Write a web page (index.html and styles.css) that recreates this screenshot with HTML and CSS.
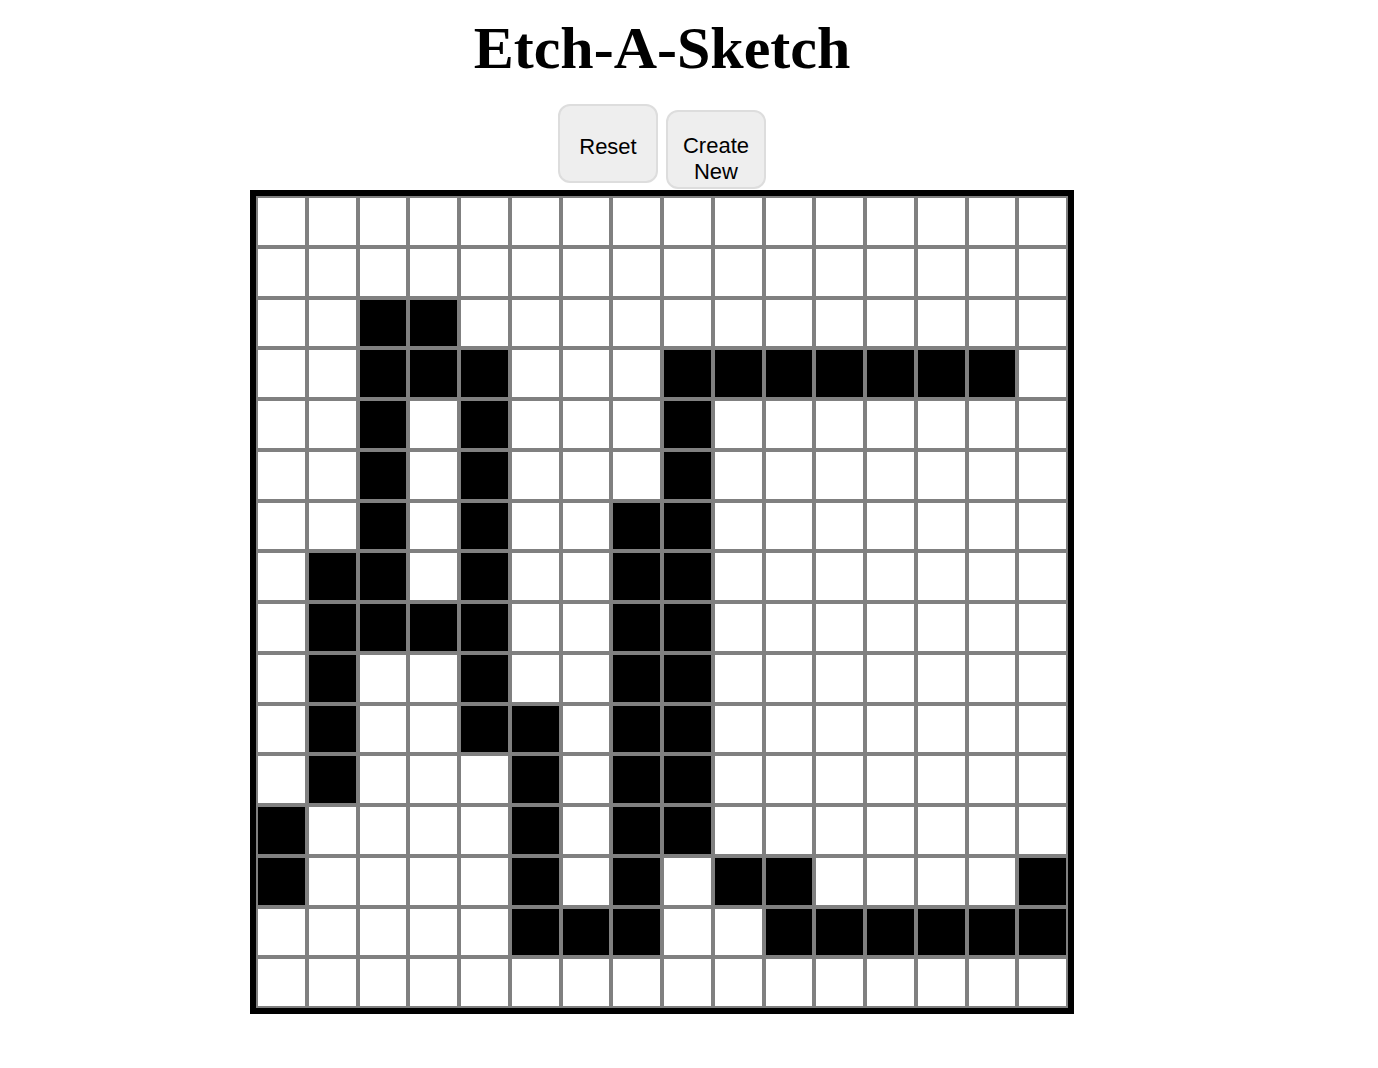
FILE: index.html
```html
<!DOCTYPE html>
<html lang="en">
<head>
    <meta charset="UTF-8">
    <meta name="viewport" content="width=device-width, initial-scale=1.0">
    <title>Etch-A-Sketch</title>
    <link rel="stylesheet" href="styles.css">
</head>
<body>
    <div class="page">
        <h1>Etch-A-Sketch</h1>
        <div class="controls">
            <button type="button" class="btn" id="resetButton" onclick="resetGrid()">Reset</button>
            <button type="button" class="btn btn-create" id="createButton" onclick="createGrid(16)">Create New</button>
        </div>
        <div class="sketch" id="sketch"></div>
    </div>

    <script>
        const size = 16;

        // cells that were already drawn, as [row, column]
        const drawn = [
            [2, 2], [2, 3],
            [3, 2], [3, 3], [3, 4], [3, 8], [3, 9], [3, 10], [3, 11], [3, 12], [3, 13], [3, 14],
            [4, 2], [4, 4], [4, 8],
            [5, 2], [5, 4], [5, 8],
            [6, 2], [6, 4], [6, 7], [6, 8],
            [7, 1], [7, 2], [7, 4], [7, 7], [7, 8],
            [8, 1], [8, 2], [8, 3], [8, 4], [8, 7], [8, 8],
            [9, 1], [9, 4], [9, 7], [9, 8],
            [10, 1], [10, 4], [10, 5], [10, 7], [10, 8],
            [11, 1], [11, 5], [11, 7], [11, 8],
            [12, 0], [12, 5], [12, 7], [12, 8],
            [13, 0], [13, 5], [13, 7], [13, 9], [13, 10], [13, 15],
            [14, 5], [14, 6], [14, 7], [14, 10], [14, 11], [14, 12], [14, 13], [14, 14], [14, 15]
        ];

        function createGrid(n) {
            const sketch = document.getElementById('sketch');
            sketch.innerHTML = '';
            sketch.style.gridTemplateColumns = `repeat(${n}, 1fr)`;
            sketch.style.gridTemplateRows = `repeat(${n}, 1fr)`;
            for (let i = 0; i < n * n; i++) {
                const cell = document.createElement('div');
                cell.className = 'cell';
                cell.addEventListener('mouseover', () => cell.classList.add('filled'));
                sketch.appendChild(cell);
            }
        }

        function resetGrid() {
            document.querySelectorAll('.cell').forEach(cell => cell.classList.remove('filled'));
        }

        createGrid(size);
        const cells = document.querySelectorAll('.cell');
        drawn.forEach(([r, c]) => cells[r * size + c].classList.add('filled'));
    </script>
</body>
</html>
```

FILE: styles.css
```css
body {
    margin: 0;
    padding: 0;
    background-color: #ffffff;
}
.page {
    width: 1324px;
    text-align: center;
}
h1 {
    font-family: "Liberation Serif", "Times New Roman", serif;
    font-size: 60px;
    font-weight: bold;
    margin: 14px 0 21px;
}
.controls {
    display: flex;
    justify-content: center;
    align-items: flex-start;
    gap: 8px;
}
.btn {
    width: 100px;
    height: 79px;
    padding: 6px 0 0;
    background-color: #eeeeee;
    border: 2px solid #dddddd;
    border-radius: 12px;
    box-sizing: border-box;
    font-family: "Liberation Sans", Arial, sans-serif;
    font-size: 22px;
    line-height: 26px;
    color: #000000;
    cursor: pointer;
}
.btn-create {
    margin-top: 6px;
    padding: 18px 10px 0;
}
.sketch {
    display: grid;
    width: 812px;
    height: 812px;
    margin: 1px auto 0;
    border: 6px solid #000000;
}
.cell {
    background-color: #ffffff;
    border: 2px solid #808080;
    box-sizing: border-box;
}
.cell.filled {
    background-color: #000000;
}
```
